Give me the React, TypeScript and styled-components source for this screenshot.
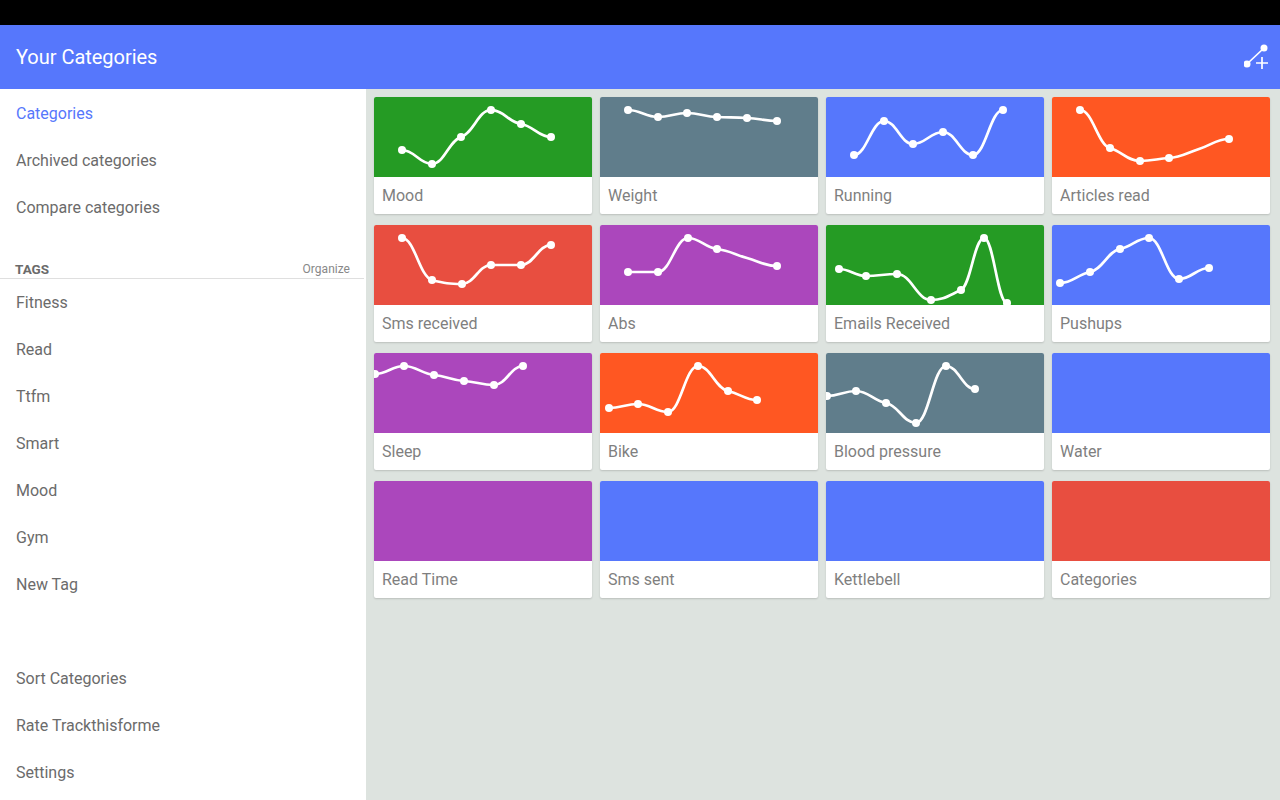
import { FC } from 'react';
import styled, { createGlobalStyle } from 'styled-components';

const Colors = {
    blue: '#5677fc',
    green: '#259b24',
    slate: '#607d8b',
    orange: '#ff5722',
    red: '#e84e40',
    purple: '#ab47bc',
    page: '#dde3df',
    navText: '#6b6b6b',
    cardText: '#7f7f7f',
};

const GlobalStyle = createGlobalStyle`
html, body {
    margin: 0;
    padding: 0;
    height: 800px;
    overflow: hidden;
    background: #000;
    font-family: Roboto, "Liberation Sans", sans-serif;
}
`;

const Screen = styled.div`
width: 1280px;
height: 800px;
display: flex;
flex-direction: column;
`;
const StatusBar = styled.div`
height: 25px;
background-color: #000;
flex: none;
`;
const AppBar = styled.header`
height: 64px;
flex: none;
display: flex;
align-items: center;
justify-content: space-between;
padding: 0 8px 0 16px;
background-color: ${Colors.blue};
color: #fff;
`;
const AppTitle = styled.h1`
margin: 0;
font-size: 20px;
font-weight: 400;
letter-spacing: -0.03px;
`;
const Body = styled.div`
flex: 1;
display: flex;
min-height: 0;
`;
const Sidebar = styled.nav`
width: 366px;
flex: none;
padding-top: 1px;
background-color: #fff;
display: flex;
flex-direction: column;
`;
const NavItem = styled.div<{ $active?: boolean }>`
height: 47px;
flex: none;
display: flex;
align-items: center;
padding-left: 16px;
font-size: 16px;
color: ${(p) => (p.$active ? Colors.blue : Colors.navText)};
`;
const TagsHeader = styled.div`
height: 48px;
flex: none;
box-sizing: border-box;
margin-right: 2px;
display: flex;
align-items: flex-end;
justify-content: space-between;
padding: 0 14px 0 15px;
border-bottom: 1px solid #dfdfdf;
`;
const TagsTitle = styled.span`
font-size: 13.5px;
font-weight: 700;
line-height: 17px;
color: ${Colors.navText};
`;
const Organize = styled.span`
font-size: 12px;
line-height: 17px;
letter-spacing: 0.02px;
color: #888888;
`;
const BottomNav = styled.div`
margin-top: 47px;
`;
const Main = styled.main`
flex: 1;
background-color: ${Colors.page};
display: grid;
grid-template-columns: repeat(4, 218px);
grid-auto-rows: 117px;
gap: 11px 8px;
padding: 8px 0 0 8px;
align-content: start;
`;
const Card = styled.article`
border-radius: 2px;
overflow: hidden;
background-color: #fff;
box-shadow: 0 1px 2px rgba(0, 0, 0, 0.16);
display: flex;
flex-direction: column;
`;
const ChartArea = styled.div<{ $color: string }>`
height: 80px;
flex: none;
background-color: ${(p) => p.$color};
`;
const ChartSvg = styled.svg`
display: block;
`;
const CardLabel = styled.div`
flex: 1;
display: flex;
align-items: center;
padding-left: 8px;
font-size: 16px;
color: ${Colors.cardText};
`;

type Point = [number, number];

interface Category {
    name: string;
    color: string;
    points?: Point[];
    hiddenDots?: number[];
}

const categories: Category[] = [
    { name: 'Mood', color: Colors.green, points: [[28, 53], [58, 67], [87, 40], [117, 13], [147, 27], [177, 40]] },
    { name: 'Weight', color: Colors.slate, points: [[28, 13], [58, 20], [87, 16], [117, 20], [147, 21], [177, 24]] },
    { name: 'Running', color: Colors.blue, points: [[28, 58], [58, 24], [87, 47], [117, 35], [147, 58], [177, 13]] },
    { name: 'Articles read', color: Colors.orange, points: [[28, 13], [58, 51], [88, 64], [117, 61], [147, 52], [177, 42]], hiddenDots: [4] },
    { name: 'Sms received', color: Colors.red, points: [[28, 13], [58, 55], [88, 59], [117, 40], [147, 40], [177, 20]] },
    { name: 'Abs', color: Colors.purple, points: [[28, 47], [58, 47], [88, 13], [117, 24], [147, 33], [177, 41]], hiddenDots: [4] },
    { name: 'Emails Received', color: Colors.green, points: [[13, 44], [40, 51], [71, 49], [105, 75], [135, 65], [158, 13], [181, 78]] },
    { name: 'Pushups', color: Colors.blue, points: [[8, 58], [38, 47], [68, 24], [97, 13], [127, 54], [157, 43]] },
    { name: 'Sleep', color: Colors.purple, points: [[1, 21], [30, 13], [60, 22], [90, 28], [120, 32], [149, 13]] },
    { name: 'Bike', color: Colors.orange, points: [[9, 55], [38, 51], [68, 59], [98, 13], [128, 38], [157, 47]] },
    { name: 'Blood pressure', color: Colors.slate, points: [[1, 43], [30, 38], [60, 50], [90, 70], [120, 13], [149, 36]] },
    { name: 'Water', color: Colors.blue },
    { name: 'Read Time', color: Colors.purple },
    { name: 'Sms sent', color: Colors.blue },
    { name: 'Kettlebell', color: Colors.blue },
    { name: 'Categories', color: Colors.red },
];

// the reference flattens out a bit at every dot, so the tangents are damped
// points without a dot keep the full slope, they should not show a kink
const FLATTEN = 0.35;

const smoothPath = (pts: Point[], hiddenDots: number[]) => {
    const n = pts.length;
    const slopes: number[] = [];
    for (let i = 0; i < n - 1; i++) {
        slopes.push((pts[i + 1][1] - pts[i][1]) / (pts[i + 1][0] - pts[i][0]));
    }
    const tangents = pts.map((_, i) => {
        if (i === 0 || i === n - 1) return 0;
        if (slopes[i - 1] * slopes[i] <= 0) return 0;
        return ((slopes[i - 1] + slopes[i]) / 2) * (hiddenDots.includes(i) ? 1 : FLATTEN);
    });
    let d = `M${pts[0][0]} ${pts[0][1]}`;
    for (let i = 0; i < n - 1; i++) {
        const h = (pts[i + 1][0] - pts[i][0]) * 0.42;
        d += ` C${pts[i][0] + h} ${pts[i][1] + tangents[i] * h} ${pts[i + 1][0] - h} ${pts[i + 1][1] - tangents[i + 1] * h} ${pts[i + 1][0]} ${pts[i + 1][1]}`;
    }
    return d;
};

const LineChart: FC<{ points: Point[]; hiddenDots?: number[] }> = ({ points, hiddenDots = [] }) => (
    <ChartSvg width="218" height="80" viewBox="0 0 218 80">
        <path d={smoothPath(points, hiddenDots)} fill="none" stroke="#fff" strokeWidth="2.7" />
        {points.map((p, i) =>
            hiddenDots.includes(i) ? null : <circle key={i} cx={p[0]} cy={p[1]} r="4" fill="#fff" />
        )}
    </ChartSvg>
);

const AddGraphIcon: FC = () => (
    <svg width="28" height="28" viewBox="0 0 28 28" fill="none" stroke="#fff">
        <line x1="3" y1="21" x2="20" y2="5" strokeWidth="1.7" />
        <circle cx="3" cy="21" r="3.5" fill="#fff" stroke="none" />
        <circle cx="20" cy="5" r="3.5" fill="#fff" stroke="none" />
        <path d="M12 20H24M18 14V26" strokeWidth="1.7" />
    </svg>
);

const topLinks = ['Categories', 'Archived categories', 'Compare categories'];
const tags = ['Fitness', 'Read', 'Ttfm', 'Smart', 'Mood', 'Gym', 'New Tag'];
const bottomLinks = ['Sort Categories', 'Rate Trackthisforme', 'Settings'];

const App: FC = () => (
    <Screen>
        <GlobalStyle />
        <StatusBar />
        <AppBar>
            <AppTitle>Your Categories</AppTitle>
            <AddGraphIcon />
        </AppBar>
        <Body>
            <Sidebar>
                {topLinks.map((v, i) => (
                    <NavItem key={v} $active={i === 0}>{v}</NavItem>
                ))}
                <TagsHeader>
                    <TagsTitle>TAGS</TagsTitle>
                    <Organize>Organize</Organize>
                </TagsHeader>
                {tags.map((v) => (
                    <NavItem key={v}>{v}</NavItem>
                ))}
                <BottomNav>
                    {bottomLinks.map((v) => (
                        <NavItem key={v}>{v}</NavItem>
                    ))}
                </BottomNav>
            </Sidebar>
            <Main>
                {categories.map((c) => (
                    <Card key={c.name}>
                        <ChartArea $color={c.color}>
                            {c.points && <LineChart points={c.points} hiddenDots={c.hiddenDots} />}
                        </ChartArea>
                        <CardLabel>{c.name}</CardLabel>
                    </Card>
                ))}
            </Main>
        </Body>
    </Screen>
);

export default App;
